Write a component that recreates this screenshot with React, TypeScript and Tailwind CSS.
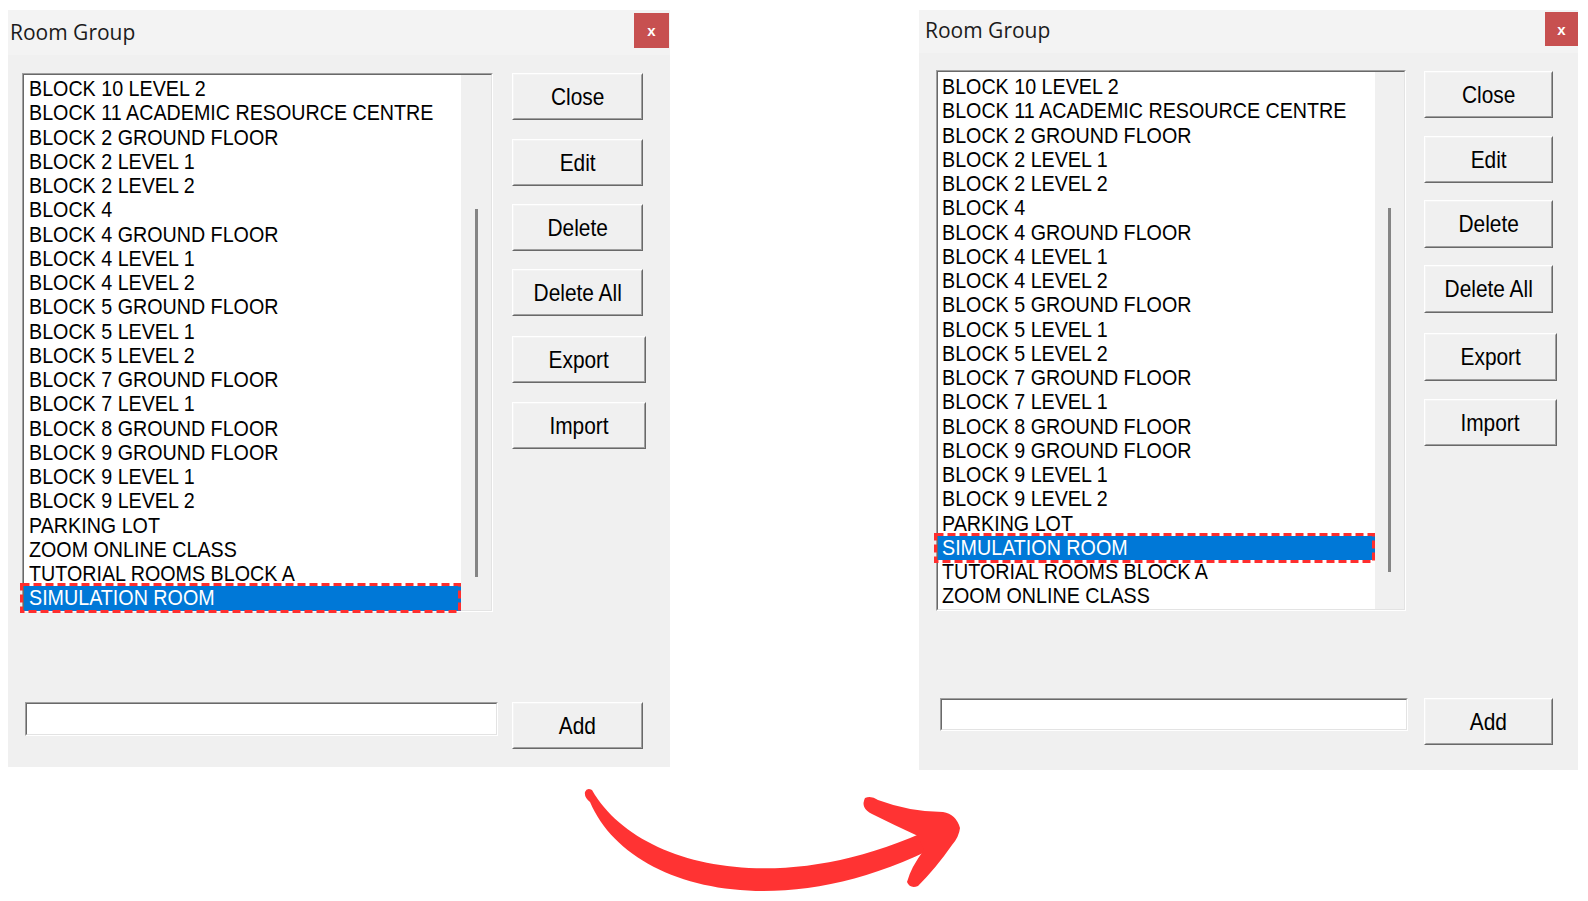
import React from "react";

const LEFT_ITEMS = [
  "BLOCK 10 LEVEL 2",
  "BLOCK 11 ACADEMIC RESOURCE CENTRE",
  "BLOCK 2 GROUND FLOOR",
  "BLOCK 2 LEVEL 1",
  "BLOCK 2 LEVEL 2",
  "BLOCK 4",
  "BLOCK 4 GROUND FLOOR",
  "BLOCK 4 LEVEL 1",
  "BLOCK 4 LEVEL 2",
  "BLOCK 5 GROUND FLOOR",
  "BLOCK 5 LEVEL 1",
  "BLOCK 5 LEVEL 2",
  "BLOCK 7 GROUND FLOOR",
  "BLOCK 7 LEVEL 1",
  "BLOCK 8 GROUND FLOOR",
  "BLOCK 9 GROUND FLOOR",
  "BLOCK 9 LEVEL 1",
  "BLOCK 9 LEVEL 2",
  "PARKING LOT",
  "ZOOM ONLINE CLASS",
  "TUTORIAL ROOMS BLOCK A",
  "SIMULATION ROOM",
];

const RIGHT_ITEMS = [
  "BLOCK 10 LEVEL 2",
  "BLOCK 11 ACADEMIC RESOURCE CENTRE",
  "BLOCK 2 GROUND FLOOR",
  "BLOCK 2 LEVEL 1",
  "BLOCK 2 LEVEL 2",
  "BLOCK 4",
  "BLOCK 4 GROUND FLOOR",
  "BLOCK 4 LEVEL 1",
  "BLOCK 4 LEVEL 2",
  "BLOCK 5 GROUND FLOOR",
  "BLOCK 5 LEVEL 1",
  "BLOCK 5 LEVEL 2",
  "BLOCK 7 GROUND FLOOR",
  "BLOCK 7 LEVEL 1",
  "BLOCK 8 GROUND FLOOR",
  "BLOCK 9 GROUND FLOOR",
  "BLOCK 9 LEVEL 1",
  "BLOCK 9 LEVEL 2",
  "PARKING LOT",
  "SIMULATION ROOM",
  "TUTORIAL ROOMS BLOCK A",
  "ZOOM ONLINE CLASS",
];

const SELECTED = "SIMULATION ROOM";

function WinButton({ label, cls }: { label: string; cls: string }) {
  return (
    <div
      className={`flex shrink-0 border border-t-white border-l-white border-r-[#696969] border-b-[#696969] bg-[#f0f0f0] ${cls}`}
    >
      <div className="flex flex-1 items-center justify-center border border-t-[#f4f4f4] border-l-[#f4f4f4] border-r-[#a0a0a0] border-b-[#a0a0a0]">
        <span className="inline-block scale-x-[0.87] whitespace-nowrap font-['Liberation_Sans',Arial,sans-serif] text-[24px] leading-none text-black">
          {label}
        </span>
      </div>
    </div>
  );
}

function Row({ text, padCls }: { text: string; padCls: string }) {
  const sel = text === SELECTED;
  return (
    <div
      className={`relative h-[24.25px] whitespace-nowrap font-['Liberation_Sans',Arial,sans-serif] text-[22px] leading-[24.25px] ${padCls} ${
        sel ? "bg-[#0078d7] text-white" : "text-black"
      }`}
    >
      <span className="inline-block origin-left scale-x-[0.895]">{text}</span>
      {sel && (
        <svg
          className="pointer-events-none absolute -left-[4px] -top-[3px]"
          width="441"
          height="30"
          viewBox="0 0 441 30"
        >
          <rect
            x="1.5"
            y="1.5"
            width="438"
            height="27"
            fill="none"
            stroke="#ff2e2e"
            strokeWidth="3"
            strokeDasharray="8 4"
          />
        </svg>
      )}
    </div>
  );
}

function ListBox({
  items,
  sizeCls,
  listPadCls,
  rowPadCls,
  thumbCls,
}: {
  items: string[];
  sizeCls: string;
  listPadCls: string;
  rowPadCls: string;
  thumbCls: string;
}) {
  return (
    <div
      className={`flex shrink-0 border border-t-[#a0a0a0] border-l-[#a0a0a0] border-r-white border-b-white ${sizeCls}`}
    >
      <div className="flex flex-1 border border-t-[#696969] border-l-[#696969] border-r-[#e3e3e3] border-b-[#e3e3e3]">
        <div className={`relative w-[437px] bg-white ${listPadCls}`}>
          {items.map((t) => (
            <Row key={t} text={t} padCls={rowPadCls} />
          ))}
        </div>
        <div className="flex flex-1 flex-col items-center bg-[#f0f0f0]">
          <div className={`w-[3px] bg-[#858585] ${thumbCls}`} />
        </div>
      </div>
    </div>
  );
}

function TextInput({ cls }: { cls: string }) {
  return (
    <div
      className={`flex shrink-0 border border-t-[#a0a0a0] border-l-[#a0a0a0] border-r-white border-b-white ${cls}`}
    >
      <div className="flex-1 border border-t-[#696969] border-l-[#696969] border-r-[#e3e3e3] border-b-[#e3e3e3] bg-white" />
    </div>
  );
}

function CloseX({ cls }: { cls: string }) {
  return (
    <div
      className={`flex shrink-0 items-center justify-center bg-[#c75050] ${cls}`}
    >
      <span className="font-['Liberation_Sans',Arial,sans-serif] text-[15px] font-bold leading-none text-white">
        x
      </span>
    </div>
  );
}

function LeftDialog() {
  return (
    <div className="ml-[8px] flex h-[757px] w-[662px] shrink-0 flex-col bg-[#f0f0f0]">
      <div className="flex h-[45px] items-start justify-between bg-[#f3f3f3]">
        <div className="flex h-[45px] items-center pl-[2px] font-['Open_Sans',sans-serif] text-[21px] text-[#1b1b1b]">
          Room Group
        </div>
        <CloseX cls="mt-[3px] mr-[1px] h-[35px] w-[35px]" />
      </div>
      <div className="flex">
        <div className="ml-[14px] mt-[18px]">
          <ListBox
            items={LEFT_ITEMS}
            sizeCls="h-[539px] w-[471px]"
            listPadCls="pt-[2px]"
            rowPadCls="pl-[5px]"
            thumbCls="mt-[134px] h-[368px]"
          />
        </div>
        <div className="ml-[19px] mt-[18px] flex flex-col">
          <WinButton label="Close" cls="h-[47px] w-[131px]" />
          <WinButton label="Edit" cls="mt-[19px] h-[47px] w-[131px]" />
          <WinButton label="Delete" cls="mt-[18px] h-[47px] w-[131px]" />
          <WinButton label="Delete All" cls="mt-[18px] h-[47px] w-[131px]" />
          <WinButton label="Export" cls="mt-[20px] h-[47px] w-[134px]" />
          <WinButton label="Import" cls="mt-[19px] h-[47px] w-[134px]" />
        </div>
      </div>
      <div className="mt-[90px] flex items-start">
        <TextInput cls="ml-[17px] h-[34px] w-[473px]" />
        <WinButton label="Add" cls="ml-[14px] h-[47px] w-[131px]" />
      </div>
    </div>
  );
}

function RightDialog() {
  return (
    <div className="ml-[249px] flex h-[760px] w-[659px] shrink-0 flex-col bg-[#f0f0f0]">
      <div className="flex h-[43px] items-start justify-between bg-[#f3f3f3]">
        <div className="flex h-[41px] items-center pl-[6px] font-['Open_Sans',sans-serif] text-[21px] text-[#1b1b1b]">
          Room Group
        </div>
        <CloseX cls="mt-[2px] h-[34px] w-[33px]" />
      </div>
      <div className="flex">
        <div className="ml-[17px] mt-[17px]">
          <ListBox
            items={RIGHT_ITEMS}
            sizeCls="h-[541px] w-[470px]"
            listPadCls="pt-[3px]"
            rowPadCls="pl-[4px]"
            thumbCls="mt-[136px] h-[364px]"
          />
        </div>
        <div className="ml-[18px] mt-[18px] flex flex-col">
          <WinButton label="Close" cls="h-[47px] w-[129px]" />
          <WinButton label="Edit" cls="mt-[18px] h-[47px] w-[129px]" />
          <WinButton label="Delete" cls="mt-[17px] h-[48px] w-[129px]" />
          <WinButton label="Delete All" cls="mt-[17px] h-[48px] w-[129px]" />
          <WinButton label="Export" cls="mt-[20px] h-[48px] w-[133px]" />
          <WinButton label="Import" cls="mt-[18px] h-[47px] w-[133px]" />
        </div>
      </div>
      <div className="mt-[87px] flex items-start">
        <TextInput cls="ml-[21px] h-[33px] w-[468px]" />
        <WinButton label="Add" cls="ml-[16px] h-[47px] w-[129px]" />
      </div>
    </div>
  );
}

function Arrow() {
  return (
    <svg
      className="ml-[560px] block"
      width="420"
      height="131"
      viewBox="0 0 420 131"
    >
      <path
        d="M 25 22 Q 27 17 32 20 C 78 100, 228 132, 385 52 L 392 68 C 228 160, 68 122, 30 32 Q 24 27 25 22 Z"
        fill="#ff3333"
      />
      <path
        d="M 305 28 Q 311 25 318 30 Q 350 42 383 42 Q 396 44 400 58 Q 399 67 392 75 Q 376 98 358 116 Q 350 119 347 112 Q 351 97 364 80 L 358 66 Q 334 55 312 44 Q 300 38 305 28 Z"
        fill="#ff3333"
      />
    </svg>
  );
}

export default function App() {
  return (
    <div className="h-[901px] w-[1588px] overflow-hidden bg-white">
      <div className="flex h-[770px] items-start pt-[10px]">
        <LeftDialog />
        <RightDialog />
      </div>
      <Arrow />
    </div>
  );
}
